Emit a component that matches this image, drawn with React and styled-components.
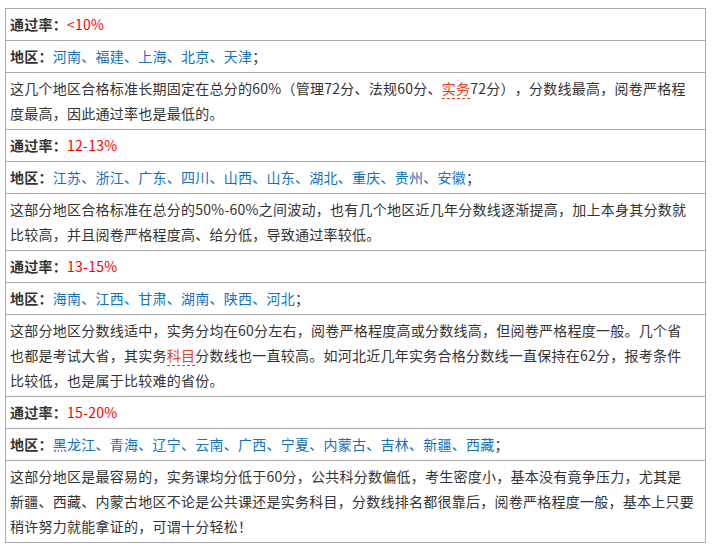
import React from "react";
import styled, { createGlobalStyle } from "styled-components";

const Global = createGlobalStyle`
  html, body { margin: 0; padding: 0; background: #fff; }
  body {
    font-family: "Noto Sans CJK SC", "Microsoft YaHei", "Noto Sans", sans-serif;
    font-size: 14px;
    color: #333;
    text-spacing-trim: space-all;
  }
`;

const Page = styled.div`
  padding: 8px 8px 0 5px;
`;

const Table = styled.table`
  width: 701px;
  border-collapse: collapse;
  border: 1px solid #aaa;
`;

const Cell = styled.td`
  border: 1px solid #aaa;
  padding: 3px 2px 3px 4px;
  line-height: 25px;
  font-size: 14px;
  letter-spacing: 0.25px;
  color: #333;
  text-spacing-trim: space-all;
`;

const Label = styled.strong`
  font-weight: bold;
  color: #333;
`;

const Rate = styled.span`
  color: #ff0000;
`;

const Regions = styled.span`
  color: #1570c0;
`;

const Keyword = styled.span`
  color: #e8401c;
  border-bottom: 1px dashed #e8401c;
`;

const sections = [
  {
    rate: "<10%",
    regions: "河南、福建、上海、北京、天津",
    desc: [
      <>这几个地区合格标准长期固定在总分的60%（管理72分、法规60分、<Keyword>实务</Keyword>72分），分数线最高，阅卷严格程</>,
      <>度最高，因此通过率也是最低的。</>,
    ],
  },
  {
    rate: "12-13%",
    regions: "江苏、浙江、广东、四川、山西、山东、湖北、重庆、贵州、安徽",
    desc: [
      <>这部分地区合格标准在总分的50%-60%之间波动，也有几个地区近几年分数线逐渐提高，加上本身其分数就</>,
      <>比较高，并且阅卷严格程度高、给分低，导致通过率较低。</>,
    ],
  },
  {
    rate: "13-15%",
    regions: "海南、江西、甘肃、湖南、陕西、河北",
    desc: [
      <>这部分地区分数线适中，实务分均在60分左右，阅卷严格程度高或分数线高，但阅卷严格程度一般。几个省</>,
      <>也都是考试大省，其实务<Keyword>科目</Keyword>分数线也一直较高。如河北近几年实务合格分数线一直保持在62分，报考条件</>,
      <>比较低，也是属于比较难的省份。</>,
    ],
  },
  {
    rate: "15-20%",
    regions: "黑龙江、青海、辽宁、云南、广西、宁夏、内蒙古、吉林、新疆、西藏",
    desc: [
      <>这部分地区是最容易的，实务课均分低于60分，公共科分数偏低，考生密度小，基本没有竟争压力，尤其是</>,
      <>新疆、西藏、内蒙古地区不论是公共课还是实务科目，分数线排名都很靠后，阅卷严格程度一般，基本上只要</>,
      <>稍许努力就能拿证的，可谓十分轻松！</>,
    ],
  },
];

export default function App() {
  return (
    <Page>
      <Global />
      <Table>
        <tbody>
          {sections.map((s, i) => (
            <React.Fragment key={i}>
              <tr>
                <Cell>
                  <Label>通过率：</Label>
                  <Rate>{s.rate}</Rate>
                </Cell>
              </tr>
              <tr>
                <Cell>
                  <Label>地区：</Label>
                  <Regions>{s.regions}</Regions>；
                </Cell>
              </tr>
              <tr>
                <Cell>
                  {s.desc.map((line, j) => (
                    <React.Fragment key={j}>
                      {j > 0 && <br />}
                      {line}
                    </React.Fragment>
                  ))}
                </Cell>
              </tr>
            </React.Fragment>
          ))}
        </tbody>
      </Table>
    </Page>
  );
}
